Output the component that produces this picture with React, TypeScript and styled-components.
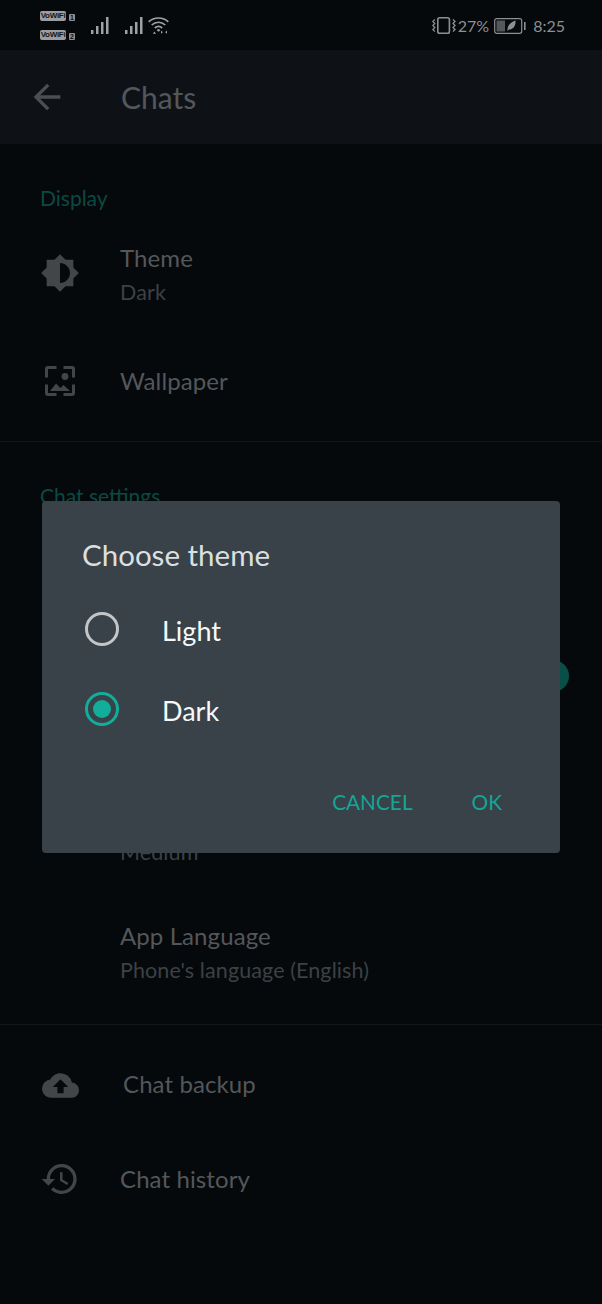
import React from "react";
import styled, { createGlobalStyle } from "styled-components";
import { MdArrowBack, MdCloudUpload, MdHistory } from "react-icons/md";

const GlobalStyle = createGlobalStyle`
  html, body { margin: 0; padding: 0; background: #05090c; }
  body { width: 602px; height: 1304px; overflow: hidden; font-family: Lato, "Open Sans", sans-serif; }
  * { box-sizing: border-box; }
`;

const Screen = styled.div`
  position: relative;
  width: 602px;
  height: 1304px;
  background: #05090c;
  overflow: hidden;
`;

const StatusBar = styled.div`
  height: 50px;
  display: flex;
  align-items: center;
  justify-content: space-between;
  padding: 1px 37px 0 40px;
`;

const StatusGroup = styled.div`
  display: flex;
  align-items: center;
`;

const StatusText = styled.span<{ $left?: number }>`
  margin-left: ${(p) => p.$left ?? 0}px;
  font-size: 16px;
  color: #8d8f90;
`;

const AppBar = styled.header`
  height: 94px;
  display: flex;
  align-items: center;
  background: #0e1216;
  padding-left: 27px;
  color: #4c4f51;
`;

const AppTitle = styled.h1`
  margin: 0 0 0 54px;
  font-size: 30px;
  font-weight: 400;
  color: #54575a;
`;

const Section = styled.section<{ $pad?: number }>`
  padding-bottom: ${(p) => p.$pad ?? 0}px;
  border-bottom: 1px solid #12161a;
`;

const SectionLabel = styled.div`
  padding: 40px 0 0 40px;
  font-size: 21px;
  line-height: 28px;
  color: #0b4a42;
`;

const Row = styled.div<{ $height: number; $titleLeft?: number }>`
  height: ${(p) => p.$height}px;
  display: flex;
  align-items: center;
  padding-left: ${(p) => p.$titleLeft ?? 120}px;
  position: relative;
`;

const IconSlot = styled.div<{ $titleLeft?: number; $lift?: number }>`
  width: 40px;
  height: 40px;
  margin-left: ${(p) => 40 - (p.$titleLeft ?? 120)}px;
  margin-right: ${(p) => (p.$titleLeft ?? 120) - 80}px;
  margin-bottom: ${(p) => p.$lift ?? 0}px;
  display: flex;
  align-items: center;
  justify-content: center;
  color: #434649;
  flex: none;
`;

const RowText = styled.div`
  display: flex;
  flex-direction: column;
  min-width: 0;
  margin-top: -2px;
`;

const RowTitle = styled.div`
  font-size: 24px;
  line-height: 34px;
  letter-spacing: 0.1px;
  color: #54575a;
`;

const RowSub = styled.div`
  font-size: 21.5px;
  line-height: 34px;
  letter-spacing: 0.1px;
  color: #3d4144;
`;

const Toggle = styled.div`
  position: absolute;
  right: 33px;
  top: 50%;
  width: 32px;
  height: 32px;
  margin-top: -16px;
  border-radius: 50%;
  background: #0a4f47;
`;

const Dialog = styled.div`
  position: absolute;
  left: 42px;
  top: 501px;
  width: 518px;
  height: 352px;
  background: #384248;
  border-radius: 4px;
  display: flex;
  flex-direction: column;
`;

const DialogTitle = styled.div`
  padding: 35px 0 0 40px;
  font-size: 29.5px;
  line-height: 38px;
  color: #dcdfe0;
`;

const OptionList = styled.div`
  margin-top: 15px;
  display: flex;
  flex-direction: column;
`;

const Option = styled.div`
  height: 80px;
  display: flex;
  align-items: center;
  padding-left: 43px;
`;

const Radio = styled.span<{ $checked?: boolean }>`
  width: 34px;
  height: 34px;
  border-radius: 50%;
  border: 3.5px solid ${(p) => (p.$checked ? "#12ad9b" : "#c3c6c8")};
  display: flex;
  align-items: center;
  justify-content: center;
  flex: none;
  &::after {
    content: "";
    display: ${(p) => (p.$checked ? "block" : "none")};
    width: 18px;
    height: 18px;
    border-radius: 50%;
    background: #12ad9b;
  }
`;

const OptionLabel = styled.span`
  margin: 3px 0 0 43px;
  font-size: 27px;
  color: #f7f8f8;
`;

const Actions = styled.div`
  margin-top: auto;
  height: 102px;
  display: flex;
  justify-content: flex-end;
  align-items: center;
  gap: 59px;
  padding-right: 58px;
`;

const ActionButton = styled.button`
  background: none;
  border: 0;
  padding: 0;
  font-family: inherit;
  font-size: 20.8px;
  line-height: 30px;
  color: #14a596;
`;

const VoWifiStack = styled.div`
  display: flex;
  flex-direction: column;
  gap: 9px;
  width: 36px;
`;

const VoWifiLine = styled.div`
  display: flex;
  align-items: flex-end;
  gap: 3px;
`;

const VoWifiBadge = styled.span`
  background: #9c9d9e;
  color: #15181a;
  border-radius: 2px;
  font-family: "Liberation Sans", sans-serif;
  font-size: 8px;
  font-weight: 700;
  line-height: 10px;
  height: 10px;
  width: 26px;
  text-align: center;
  letter-spacing: -0.3px;
  white-space: nowrap;
  overflow: hidden;
`;

const SimTag = styled.span`
  background: #8d8f90;
  color: #0a0d10;
  border-radius: 1px;
  font-family: "Liberation Sans", sans-serif;
  font-size: 7px;
  font-weight: 700;
  line-height: 7px;
  width: 6px;
  text-align: center;
`;

const SignalSvg = styled.svg<{ $left: number }>`
  margin-left: ${(p) => p.$left}px;
  fill: #a0a1a2;
`;

const StatusSvg = styled.svg<{ $left?: number }>`
  margin-left: ${(p) => p.$left ?? 0}px;
`;

const Signal = ({ left }: { left: number }) => (
  <SignalSvg $left={left} width="18" height="17" viewBox="0 0 18 17">
    <rect x="0" y="13" width="2.5" height="4" />
    <rect x="5" y="9" width="2.5" height="8" />
    <rect x="10" y="5" width="2.5" height="12" />
    <rect x="15" y="0" width="2.5" height="17" />
  </SignalSvg>
);

const WifiIcon = () => (
  <StatusSvg $left={5} width="21" height="17" viewBox="0 0 21 17" fill="none" stroke="#a0a1a2" strokeWidth="1.7">
    <path d="M0.700 4.800C6 -0.300 15 -0.300 20.300 4.800" />
    <path d="M3.700 8C7.700 4.300 13.300 4.300 17.300 8" />
    <path d="M6.800 11C9 9 12 9 14.200 11" />
    <circle cx="10.500" cy="13.200" r="1.300" fill="#a0a1a2" stroke="none" />
    <path d="M8 16.800H4.800l1.600-2.400zM13 13.600v3.200l1.800-1.600zM19 13.600v3.200l-1.800-1.600z" fill="#a0a1a2" stroke="none" />
  </StatusSvg>
);

const VibrateIcon = () => (
  <StatusSvg width="24" height="17" viewBox="0 0 24 17" fill="none" stroke="#8d8f90" strokeWidth="1.300">
    <rect x="5.800" y="0.800" width="11.600" height="15.400" rx="1.800" strokeWidth="1.600" />
    <path d="M2.800 2.500L0.800 4.500l2 2-2 2 2 2-2 2 2 2M21 2.500l2 2-2 2 2 2-2 2 2 2-2 2" />
  </StatusSvg>
);

const BatteryIcon = () => (
  <StatusSvg $left={5} width="32" height="16" viewBox="0 0 32 16" fill="none">
    <rect x="0.700" y="0.700" width="27" height="14.600" rx="2" stroke="#8d8f90" strokeWidth="1.200" />
    <rect x="2.500" y="2.500" width="8.500" height="11" fill="#55585a" />
    <rect x="30" y="4" width="1.600" height="8" fill="#8d8f90" />
    <path d="M13.500 13c-.5-5 3-9 8-10.500.5 5.500-2.500 9-6.500 9z" fill="#8d8f90" />
  </StatusSvg>
);

const ThemeIcon = () => (
  <svg width="40" height="40" viewBox="0 0 24 24" fill="currentColor">
    <path d="M20 15.310L23.310 12 20 8.690V4h-4.690L12 .690 8.690 4H4v4.690L.690 12 4 15.310V20h4.690L12 23.310 15.310 20H20v-4.690zM12 18V6c3.310 0 6 2.690 6 6s-2.690 6-6 6z" />
  </svg>
);

const WallpaperIcon = () => (
  <svg width="32" height="32" viewBox="0 0 32 32" fill="currentColor">
    <path d="M1 12.500V4a3 3 0 0 1 3-3h8.500v3H4v8.500zM19.500 1H28a3 3 0 0 1 3 3v8.500h-3V4h-8.500zM1 19.500h3V28h8.500v3H4a3 3 0 0 1-3-3zM28 19.500h3V28a3 3 0 0 1-3 3h-8.500v-3H28z" />
    <circle cx="21" cy="11.500" r="3.400" />
    <path d="M6 26l6-7.500 4.500 4.500 3-3 6.500 6z" />
  </svg>
);

export default function App() {
  return (
    <>
      <GlobalStyle />
      <Screen>
        <StatusBar>
          <StatusGroup>
            <VoWifiStack>
              <VoWifiLine>
                <VoWifiBadge>VoWiFi</VoWifiBadge>
                <SimTag>1</SimTag>
              </VoWifiLine>
              <VoWifiLine>
                <VoWifiBadge>VoWiFi</VoWifiBadge>
                <SimTag>2</SimTag>
              </VoWifiLine>
            </VoWifiStack>
            <Signal left={15} />
            <Signal left={16} />
            <WifiIcon />
          </StatusGroup>
          <StatusGroup>
            <VibrateIcon />
            <StatusText $left={2}>27%</StatusText>
            <BatteryIcon />
            <StatusText $left={7}>8:25</StatusText>
          </StatusGroup>
        </StatusBar>

        <AppBar>
          <MdArrowBack size={40} />
          <AppTitle>Chats</AppTitle>
        </AppBar>

        <Section $pad={17}>
          <SectionLabel>Display</SectionLabel>
          <Row $height={128}>
            <IconSlot $lift={6}>
              <ThemeIcon />
            </IconSlot>
            <RowText>
              <RowTitle>Theme</RowTitle>
              <RowSub>Dark</RowSub>
            </RowText>
          </Row>
          <Row $height={84}>
            <IconSlot $lift={3}>
              <WallpaperIcon />
            </IconSlot>
            <RowText>
              <RowTitle>Wallpaper</RowTitle>
            </RowText>
          </Row>
        </Section>

        <Section $pad={11}>
          <SectionLabel>Chat settings</SectionLabel>
          <Row $height={65} />
          <Row $height={202}>
            <Toggle />
          </Row>
          <Row $height={118}>
            <RowText>
              <RowTitle>Font size</RowTitle>
              <RowSub>Medium</RowSub>
            </RowText>
          </Row>
          <Row $height={118}>
            <RowText>
              <RowTitle>App Language</RowTitle>
              <RowSub>Phone's language (English)</RowSub>
            </RowText>
          </Row>
        </Section>

        <Row $height={120} $titleLeft={123}>
          <IconSlot $titleLeft={123}>
            <MdCloudUpload size={37} />
          </IconSlot>
          <RowText>
            <RowTitle>Chat backup</RowTitle>
          </RowText>
        </Row>
        <Row $height={70}>
          <IconSlot $lift={3}>
            <MdHistory size={40} />
          </IconSlot>
          <RowText>
            <RowTitle>Chat history</RowTitle>
          </RowText>
        </Row>

        <Dialog>
          <DialogTitle>Choose theme</DialogTitle>
          <OptionList>
            <Option>
              <Radio />
              <OptionLabel>Light</OptionLabel>
            </Option>
            <Option>
              <Radio $checked />
              <OptionLabel>Dark</OptionLabel>
            </Option>
          </OptionList>
          <Actions>
            <ActionButton>CANCEL</ActionButton>
            <ActionButton>OK</ActionButton>
          </Actions>
        </Dialog>
      </Screen>
    </>
  );
}
